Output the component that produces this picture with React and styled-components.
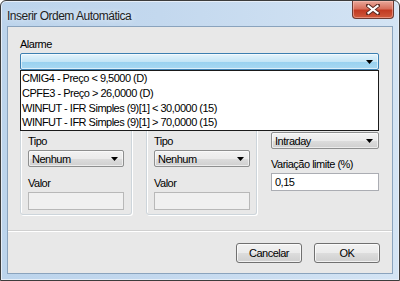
import styled, { createGlobalStyle } from 'styled-components'

const GlobalStyle = createGlobalStyle`
  html, body { margin: 0; padding: 0; background: #ffffff; }
  body { font-family: "Liberation Sans", Arial, sans-serif; font-size: 11px; color: #000; letter-spacing: -0.5px; }
  * { box-sizing: border-box; }
`

const alarms = [
    'CMIG4 - Preço < 9,5000 (D)',
    'CPFE3 - Preço > 26,0000 (D)',
    'WINFUT - IFR Simples (9)[1] < 30,0000 (15)',
    'WINFUT - IFR Simples (9)[1] > 70,0000 (15)',
]

function Arrow() {
    return (
        <svg width="7" height="4" viewBox="0 0 7 4">
            <path d="M0 0 L7 0 L3.5 4 Z" fill="#000" />
        </svg>
    )
}

function CloseGlyph() {
    return (
        <svg width="14" height="11" viewBox="0 0 14 11">
            <path d="M2 1.5 L12 9.5 M12 1.5 L2 9.5" stroke="#5a2a22" strokeWidth="4" strokeLinecap="square" />
            <path d="M2.5 2 L11.5 9 M11.5 2 L2.5 9" stroke="#ffffff" strokeWidth="2.2" strokeLinecap="square" />
        </svg>
    )
}

function App() {
    return (
        <>
            <GlobalStyle />
            <Window>
                <TitleBar>
                    <Title>Inserir Ordem Automática</Title>
                    <CloseButton><CloseGlyph /></CloseButton>
                </TitleBar>
                <Client>
                    <Label>Alarme</Label>
                    <AlarmField>
                        <Combo $active>
                            <span></span>
                            <Arrow />
                        </Combo>
                        <List>
                            {alarms.map((a) => (
                                <ListItem key={a}>{a}</ListItem>
                            ))}
                        </List>
                    </AlarmField>
                    <Row>
                        <Panel $width={112}>
                            <Label>Tipo</Label>
                            <Combo $width={96}>
                                <span>Nenhum</span>
                                <Arrow />
                            </Combo>
                            <Label $top={10}>Valor</Label>
                            <Input $width={96} $disabled />
                        </Panel>
                        <Panel $width={111}>
                            <Label>Tipo</Label>
                            <Combo $width={96}>
                                <span>Nenhum</span>
                                <Arrow />
                            </Combo>
                            <Label $top={10}>Valor</Label>
                            <Input $width={96} $disabled />
                        </Panel>
                        <Side>
                            <Combo>
                                <span>Intraday</span>
                                <Arrow />
                            </Combo>
                            <Label $top={9}>Variação limite (%)</Label>
                            <Input>0,15</Input>
                        </Side>
                    </Row>
                    <Separator />
                    <Footer>
                        <Button>Cancelar</Button>
                        <Button>OK</Button>
                    </Footer>
                </Client>
            </Window>
        </>
    )
}

const Window = styled.div`
    width: 400px;
    height: 281px;
    display: flex;
    flex-direction: column;
    border: 1px solid #3c3c3c;
    border-radius: 6px 6px 0 0;
    background: linear-gradient(90deg, #bcd4ec 0%, #c3d8ee 40%, #d4e4f4 100%);
    padding: 0 6px 6px 6px;
    box-shadow: inset 0 0 0 1px #e6eef8;
`

const TitleBar = styled.div`
    height: 25px;
    display: flex;
    align-items: flex-start;
    justify-content: space-between;
`

const Title = styled.div`
    font-family: "Liberation Sans", Arial, sans-serif;
    font-size: 12px;
    color: #1e1e1e;
    padding-top: 8px;
    text-shadow: 0 0 6px rgba(255, 255, 255, 0.9);
`

const CloseButton = styled.div`
    width: 42px;
    height: 18px;
    margin-right: -1px;
    border: 1px solid #6b3a32;
    border-top: none;
    border-radius: 0 0 4px 4px;
    background: linear-gradient(180deg, #e9a89a 0%, #d86f5c 45%, #c23a22 55%, #cf5a3c 100%);
    display: flex;
    align-items: center;
    justify-content: center;
    box-shadow: inset 0 0 0 1px rgba(255, 200, 190, 0.5);
`

const Client = styled.div`
    flex: 1;
    display: flex;
    flex-direction: column;
    background: #e8e8e8;
    border: 1px solid #8aa3bd;
    padding: 11px 13px 0 12px;
`

const Label = styled.div`
    height: 13px;
    line-height: 13px;
    font-size: 11px;
    margin-top: ${(p) => p.$top || 0}px;
    margin-bottom: 2px;
    white-space: nowrap;
`

const AlarmField = styled.div`
    position: relative;
`

const Combo = styled.div`
    width: ${(p) => (p.$width ? `${p.$width}px` : '100%')};
    height: 17px;
    display: flex;
    align-items: center;
    justify-content: space-between;
    padding: 0 5px 0 3px;
    font-size: 11px;
    border: 1px solid ${(p) => (p.$active ? '#3c7fb1' : '#8e8f8f')};
    border-radius: 2px;
    background: ${(p) =>
        p.$active
            ? 'linear-gradient(180deg, #e5f4fc 0%, #c4e5f6 50%, #98d1ef 51%, #a8d8f2 100%)'
            : 'linear-gradient(180deg, #f2f2f2 0%, #ebebeb 50%, #dddddd 51%, #cfcfcf 100%)'};
    box-shadow: inset 0 0 0 1px rgba(255, 255, 255, 0.6);
`

const List = styled.div`
    position: absolute;
    left: 0;
    right: 0;
    top: 100%;
    height: 61px;
    background: #ffffff;
    border: 1px solid #1a1a1a;
    padding: 0 0 0 1px;
    z-index: 2;
`

const ListItem = styled.div`
    height: 14.75px;
    line-height: 15px;
    font-size: 11px;
    white-space: nowrap;
`

const Row = styled.div`
    margin-top: 12px;
    display: flex;
    gap: 14px;
    height: 133px;
`

const Panel = styled.div`
    width: ${(p) => p.$width}px;
    height: 100%;
    border: 1px solid #cdd5db;
    border-radius: 3px;
    box-shadow: inset 1px 1px 0 #ffffff, 1px 1px 0 #ffffff;
    padding: 52px 0 0 7px;
`

const Side = styled.div`
    flex: 1;
    padding-top: 50px;
`

const Input = styled.div`
    width: ${(p) => (p.$width ? `${p.$width}px` : '100%')};
    height: 18px;
    line-height: 16px;
    padding: 0 3px;
    font-size: 11px;
    background: ${(p) => (p.$disabled ? '#f0f0f0' : '#ffffff')};
    border: 1px solid ${(p) => (p.$disabled ? '#b8b8b8' : '#abadb3')};
`

const Separator = styled.div`
    margin: 15px -13px 0 -12px;
    height: 2px;
    border-top: 1px solid #d0d0d0;
    border-bottom: 1px solid #ffffff;
`

const Footer = styled.div`
    display: flex;
    justify-content: flex-end;
    gap: 12px;
    margin-top: 11px;
    margin-right: -1px;
`

const Button = styled.div`
    width: 66px;
    height: 20px;
    display: flex;
    align-items: center;
    justify-content: center;
    font-size: 11px;
    border: 1px solid #707070;
    border-radius: 3px;
    background: linear-gradient(180deg, #f2f2f2 0%, #ebebeb 50%, #dddddd 51%, #cfcfcf 100%);
    box-shadow: inset 0 0 0 1px rgba(255, 255, 255, 0.7);
`

export default App
